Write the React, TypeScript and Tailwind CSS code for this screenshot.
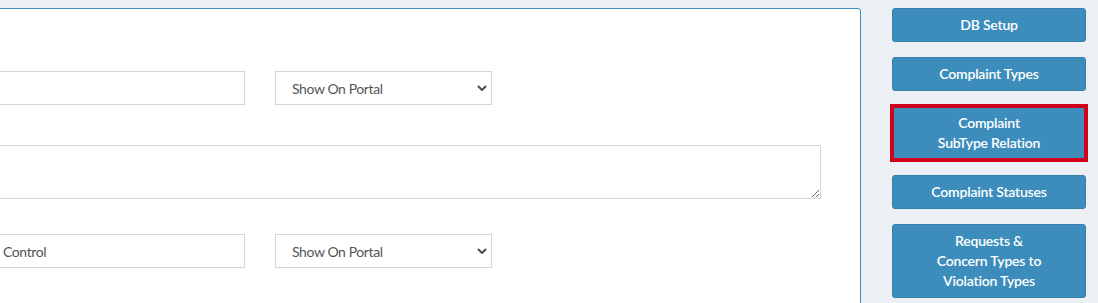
import { ReactNode } from "react";

const font = { fontFamily: '"Source Sans Pro", Lato, "Noto Sans", sans-serif' };

function Chevron() {
  return (
    <svg
      className="pointer-events-none absolute right-[5px] top-1/2 -translate-y-1/2"
      width="10"
      height="6"
      viewBox="0 0 10 6"
      aria-hidden
    >
      <path d="M1 1l4 4 4-4" fill="none" stroke="#4b4b4b" strokeWidth="2" />
    </svg>
  );
}

function PortalSelect() {
  return (
    <div className="relative w-[217px]">
      <select
        defaultValue="show"
        className="h-[34px] w-full appearance-none border border-[#d2d6de] bg-white pl-4 pr-6 text-[14px] tracking-[-0.4px] text-[#555] outline-none"
        style={font}
      >
        <option value="show">Show On Portal</option>
        <option value="hide">Hide On Portal</option>
      </select>
      <Chevron />
    </div>
  );
}

function TextInput({ value }: { value: string }) {
  return (
    <input
      defaultValue={value}
      className="h-[34px] w-[255px] border border-[#d2d6de] bg-white pl-[12px] text-[14px] tracking-[-0.4px] text-[#555] outline-none"
      style={font}
    />
  );
}

function SideButton({ children, active }: { children: ReactNode; active?: boolean }) {
  return (
    <button
      className={`w-full border border-[#367fa9] bg-[#3c8dbc] px-3 py-[6px] text-center text-[14px] leading-[20px] font-semibold tracking-[-0.2px] text-white ${
        active ? "rounded-none outline-4 outline-offset-[-2px] outline-[#d0021b]" : "rounded-[3px]"
      }`}
      style={font}
    >
      {children}
    </button>
  );
}

export default function App() {
  return (
    <div className="flex h-[303px] w-[1098px] overflow-hidden bg-[#ecf0f5]" style={font}>
      {/* form card — its left part (labels) sits off the visible area */}
      <div className="mt-[8px] -ml-[40px] h-[400px] w-[901px] shrink-0 rounded-[3px] border border-[#3c8dbc] bg-white pl-[29px] pt-[62px]">
        <div className="flex gap-[30px]">
          <TextInput value="" />
          <PortalSelect />
        </div>
        <textarea
          className="mt-[40px] block h-[54px] w-[831px] border border-[#d2d6de] bg-white outline-none"
          style={font}
        />
        <div className="mt-[35px] flex gap-[30px]">
          <TextInput value="Control" />
          <PortalSelect />
        </div>
      </div>

      <div className="ml-[31px] mt-[8px] flex w-[194px] shrink-0 flex-col gap-[15px]">
        <SideButton>DB Setup</SideButton>
        <SideButton>Complaint Types</SideButton>
        <SideButton active>
          Complaint
          <br />
          SubType Relation
        </SideButton>
        <SideButton>Complaint Statuses</SideButton>
        <SideButton>
          Requests &amp;
          <br />
          Concern Types to
          <br />
          Violation Types
        </SideButton>
      </div>
    </div>
  );
}
